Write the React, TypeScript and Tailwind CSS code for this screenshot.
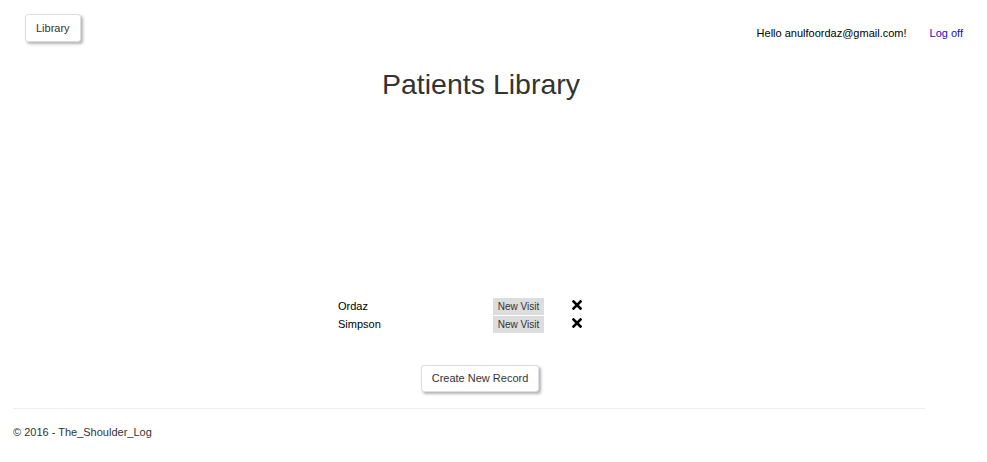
import React from "react";

export default function App() {
  const rows = ["Ordaz", "Simpson"];
  return (
    <div className="w-[987px] h-[462px] bg-white text-[#333] font-['Liberation_Sans',Arial,sans-serif] text-[11px]">
      <div className="flex justify-between items-start pl-[25px] pr-[24px] pt-[14px]">
        <button className="h-[28px] px-[10px] text-[11px] text-[#333] bg-white border border-[#ddd] rounded-[3px] shadow-[2px_2px_3px_rgba(0,0,0,0.3)]">
          Library
        </button>
        <div className="flex items-center gap-[23px] mt-[11px]">
          <span className="text-black">Hello anulfoordaz@gmail.com!</span>
          <a className="text-[#1010cc]">Log off</a>
        </div>
      </div>
      <div className="w-[962px] flex flex-col items-center">
        <h1 className="text-[28.5px] leading-[36px] mt-[24px] text-[#333]">Patients Library</h1>
        <div className="mt-[195px] ml-[-42px] flex flex-col">
          {rows.map((r) => (
            <div key={r} className="flex items-center h-[18px]">
              <span className="w-[155px] text-black">{r}</span>
              <span className="w-[51px] h-[17px] bg-[#ddd] text-[10px] flex items-center justify-center text-[#333]">New Visit</span>
              <span className="ml-[28px] w-[10px] flex items-center justify-center -mt-[3px]">
                <svg width="10" height="10" viewBox="0 0 10 10">
                  <path d="M1.5 1.5 L8.5 8.5 M8.5 1.5 L1.5 8.5" stroke="#000" strokeWidth="2.6" strokeLinecap="square" />
                </svg>
              </span>
            </div>
          ))}
        </div>
        <button className="mt-[32px] ml-[-2px] h-[27px] px-[10px] text-[11px] text-[#333] bg-white border border-[#ddd] rounded-[3px] shadow-[2px_2px_3px_rgba(0,0,0,0.3)]">
          Create New Record
        </button>
      </div>
      <div className="ml-[13px] w-[912px] mt-[16px] border-t border-[#eee]" />
      <div className="ml-[13px] mt-[15px] text-[11px] text-[#333]">© 2016 - The_Shoulder_Log</div>
    </div>
  );
}
